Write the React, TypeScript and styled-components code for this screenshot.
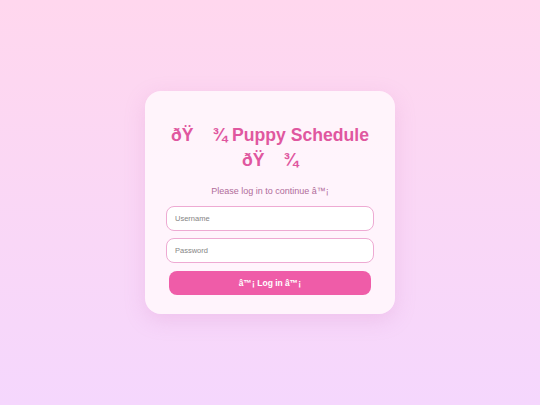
import * as React from "react"
import styled, { createGlobalStyle } from "styled-components"

const GlobalStyle = createGlobalStyle`
  html, body {
    margin: 0;
    padding: 0;
  }
  body {
    font-family: "Liberation Sans", Arial, sans-serif;
  }
`

const heart = "â™¡"

// the paw emoji arrives as mis-decoded bytes; the C1 char renders as a blank gap
const Paw = () => (
  <>
    ðŸ<Blank>{"\u0090"}</Blank>¾
  </>
)

const App = () => (
  <Page>
    <GlobalStyle />
    <Card>
      <Title>
        <Paw /> Puppy Schedule <Paw />
      </Title>
      <Subtitle>Please log in to continue {heart}</Subtitle>
      <Form onSubmit={(e) => e.preventDefault()}>
        <Input type="text" placeholder="Username" />
        <Input type="password" placeholder="Password" />
        <Button type="submit">
          {heart} Log in {heart}
        </Button>
      </Form>
    </Card>
  </Page>
)

export default App

const Page = styled.div`
  min-height: 100vh;
  display: flex;
  align-items: center;
  justify-content: center;
  background: linear-gradient(180deg, #ffd7ee 0%, #f5d7fd 100%);
`

const Card = styled.div`
  width: 250px;
  box-sizing: border-box;
  padding: 20px 21px 19px;
  background: rgba(255, 246, 252, 0.92);
  border-radius: 16px;
  box-shadow: 0 6px 20px rgba(214, 130, 200, 0.25);
  text-align: center;
`

const Title = styled.h1`
  margin: 12px 0 12px;
  font-size: 17.6px;
  line-height: 25px;
  font-weight: bold;
  color: #e0579f;
`

const Blank = styled.span`
  display: inline-block;
  width: 19px;
`

const Subtitle = styled.p`
  margin: 0 0 8px;
  font-size: 9px;
  line-height: 13px;
  color: #b06c9a;
`

const Form = styled.form`
  display: flex;
  flex-direction: column;
  gap: 7px;
`

const Input = styled.input`
  height: 25px;
  box-sizing: border-box;
  padding: 0 8px;
  border: 1.5px solid #eeaad3;
  border-radius: 8px;
  background: #ffffff;
  font-family: "Liberation Sans", Arial, sans-serif;
  font-size: 7.5px;
  color: #555;
  outline: none;

  &::placeholder {
    color: #858585;
  }
`

const Button = styled.button`
  margin: 1px 3px 0;
  height: 24px;
  border: none;
  border-radius: 8px;
  background: #ef5ca8;
  color: #ffffff;
  font-family: "Liberation Sans", Arial, sans-serif;
  font-size: 8.5px;
  font-weight: bold;
  cursor: pointer;
`
